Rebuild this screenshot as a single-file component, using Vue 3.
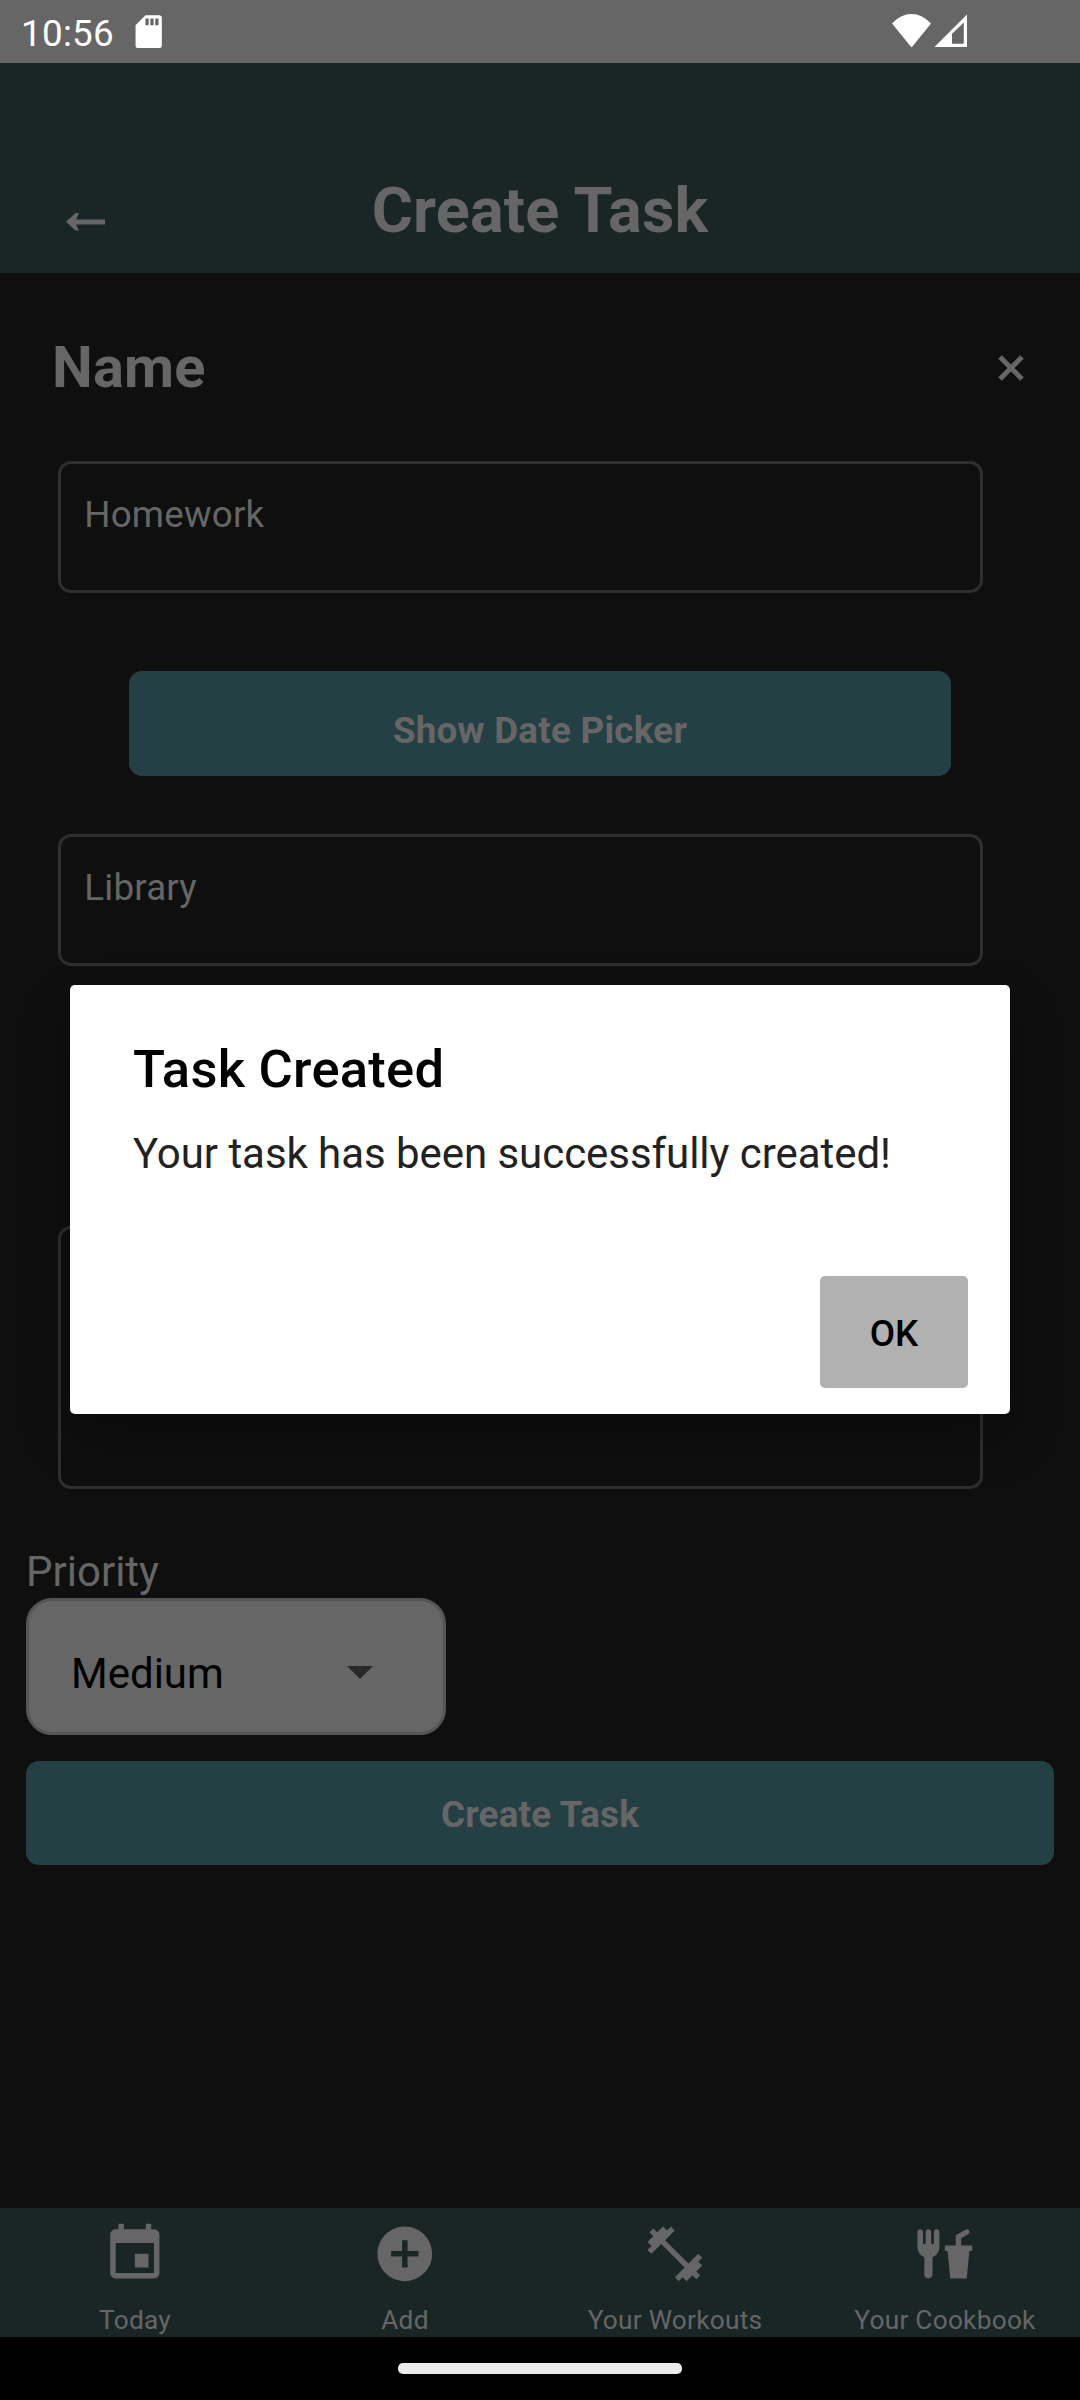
<script setup>
const tabs = [
  {
    label: 'Today',
    path: 'M17 12h-5v5h5v-5zM16 1v2H8V1H6v2H5c-1.11 0-1.99.9-1.99 2L3 19c0 1.1.89 2 2 2h14c1.1 0 2-.9 2-2V5c0-1.1-.9-2-2-2h-1V1h-2zm3 18H5V8h14v11z',
  },
  {
    label: 'Add',
    path: 'M12 2C6.48 2 2 6.48 2 12s4.48 10 10 10 10-4.48 10-10S17.52 2 12 2zm5 11h-4v4h-2v-4H7v-2h4V7h2v4h4v2z',
  },
  {
    label: 'Your Workouts',
    path: 'M20.57 14.86L22 13.43L20.57 12L17 15.57L8.43 7L12 3.43L10.57 2L9.14 3.43L7.71 2L5.57 4.14L4.14 2.71L2.71 4.14L4.14 5.57L2 7.71L3.43 9.14L2 10.57L3.43 12L7 8.43L15.57 17L12 20.57L13.43 22L14.86 20.57L16.29 22L18.43 19.86L19.86 21.29L21.29 19.86L19.86 18.43L22 16.29L20.57 14.86Z',
  },
  {
    label: 'Your Cookbook',
    path: 'M3 3A1 1 0 0 0 2 4V9.5C2 11.19 3.03 12.63 4.5 13.22V19.5A1.5 1.5 0 0 0 6 21A1.5 1.5 0 0 0 7.5 19.5V13.22C8.97 12.63 10 11.19 10 9.5V4A1 1 0 0 0 9 3A1 1 0 0 0 8 4V8A0.5 0.5 0 0 1 7.5 8.5A0.5 0.5 0 0 1 7 8V4A1 1 0 0 0 6 3A1 1 0 0 0 5 4V8A0.5 0.5 0 0 1 4.5 8.5A0.5 0.5 0 0 1 4 8V4A1 1 0 0 0 3 3M19.88 3C19.75 3 19.62 3.09 19.5 3.16L16 5.25V9H12V11H13L14 21H20L21 11H22V9H18V6.34L20.5 4.84C21 4.56 21.13 4 20.84 3.5C20.63 3.14 20.26 2.95 19.88 3Z',
  },
]
</script>

<template>
  <div class="screen">
    <div class="status">
      <span class="clock">10:56</span>
      <svg class="sd" viewBox="0 0 24 24">
        <path d="M18.500 2H10L4 8V20.5c0 .8.7 1.5 1.5 1.5h13c.8 0 1.5-.7 1.5-1.5V3.500c0-.8-.7-1.500-1.500-1.500zM12 8h-2V4h2v4zm3 0h-2V4h2v4zm3 0h-2V4h2v4z" />
      </svg>
      <svg class="signals" viewBox="0 0 75 33">
        <path d="M0 9.500Q8.500 0 19.500 0T39 9.500L19.500 33.500Z" />
        <path fill-rule="evenodd" d="M75 .5V33H42.500ZM71.800 8.500L60 19.800V29.800H71.800Z" />
      </svg>
    </div>

    <header class="header">
      <svg class="back" viewBox="0 0 39 18">
        <path d="M0 8.800L9.500 0H13L10 6.400H39V11.400H10L13 17.600H9.500Z" />
      </svg>
      <h1 class="title">Create Task</h1>
    </header>

    <main class="form">
      <div class="name-row">
        <h2 class="name">Name</h2>
        <svg class="close" viewBox="0 0 26 26">
          <path d="M2 2L24 24M24 2L2 24" />
        </svg>
      </div>
      <div class="field">Homework</div>
      <button class="btn date">Show Date Picker</button>
      <div class="field">Library</div>
      <div class="field notes"></div>
      <div class="label">Priority</div>
      <div class="select">
        <span>Medium</span>
        <svg class="caret" viewBox="0 0 26 13"><path d="M0 0H26L13 13Z" /></svg>
      </div>
      <button class="btn create">Create Task</button>
    </main>

    <nav class="tabs">
      <div v-for="tab in tabs" :key="tab.label" class="tab">
        <svg viewBox="0 0 24 24"><path :d="tab.path" /></svg>
        <span>{{ tab.label }}</span>
      </div>
    </nav>
    <div class="gesture"><div class="pill"></div></div>

    <div class="overlay">
      <div class="dialog">
        <div class="dialog-title">Task Created</div>
        <div class="dialog-text">Your task has been successfully created!</div>
        <button class="ok">OK</button>
      </div>
    </div>
  </div>
</template>

<style>
body {
  margin: 0;
  background: #0f0f0f;
}
</style>

<style scoped>
.screen {
  position: relative;
  display: flex;
  flex-direction: column;
  width: 1080px;
  height: 2400px;
  overflow: hidden;
  background: #0f0f0f;
  color: #666;
  font-family: Roboto, sans-serif;
}
.screen * {
  box-sizing: border-box;
}
svg {
  display: block;
  flex: none;
  fill: currentColor;
}
button {
  border: 0;
  font-family: inherit;
}
.status {
  display: flex;
  align-items: flex-start;
  flex: none;
  height: 63px;
  padding: 0 113px 0 21px;
  background: #666;
  color: #fff;
}
.clock {
  margin-top: 12px;
  font-size: 36.75px;
  line-height: 44px;
  letter-spacing: 0.3px;
  width: 107.500px;
}
.sd {
  width: 39.400px;
  height: 39.400px;
  margin-top: 12px;
}
.signals {
  width: 75px;
  height: 33px;
  margin: 14px 0 0 auto;
}
.header {
  display: grid;
  grid-template-columns: 1fr auto 1fr;
  align-items: end;
  flex: none;
  height: 210px;
  background: #192625;
}
.back {
  width: 39px;
  height: 18px;
  margin: 0 0 42px 66px;
}
.title {
  margin: 0 0 25px;
  font-size: 63px;
  line-height: 74px;
  font-weight: 700;
  letter-spacing: 0.15px;
}
.form {
  display: flex;
  flex-direction: column;
  align-items: flex-start;
  flex: 1;
  padding: 60px 26px 0;
}
.name-row {
  display: flex;
  align-items: center;
  justify-content: space-between;
  align-self: stretch;
  height: 68px;
  padding: 0 30px 0 26px;
  margin-bottom: 60px;
}
.name {
  margin: 0;
  font-size: 57.750px;
  line-height: 68px;
  font-weight: 700;
  letter-spacing: 0.15px;
}
.close {
  width: 26px;
  height: 26px;
  fill: none;
  stroke: currentColor;
  stroke-width: 5;
  margin-top: 2px;
}
.field {
  width: 925px;
  height: 132px;
  margin-left: 32px;
  padding: 28.500px 23.250px;
  border: 3px solid #2f2f2f;
  border-radius: 13px;
  font-size: 36.750px;
  line-height: 44px;
  letter-spacing: 0.2px;
}
.notes {
  height: 263px;
  margin-top: 260px;
}
.btn {
  background: #254045;
  color: #666;
  border-radius: 13px;
  font-size: 36.750px;
  line-height: 44px;
  font-weight: 700;
  letter-spacing: 0.25px;
}
.date {
  width: 822px;
  height: 105px;
  margin: 78px 0 58px 103px;
  padding: 15px 0 0;
}
.label {
  margin-top: 57.500px;
  font-size: 42px;
  line-height: 50px;
}
.select {
  display: flex;
  align-items: center;
  justify-content: space-between;
  width: 420px;
  height: 137px;
  margin-top: 1.500px;
  padding: 12px 70px 0 42px;
  border: 3px solid #555;
  border-radius: 26px;
  background: #666;
  color: #000;
  font-size: 42px;
  line-height: 50px;
}
.select span {
  padding-top: 3px;
}
.caret {
  width: 26px;
  height: 13px;
  fill: #292929;
}
.create {
  align-self: stretch;
  height: 104px;
  margin-top: 26px;
  padding: 4px 0 0;
}
.tabs {
  display: grid;
  grid-template-columns: repeat(4, 1fr);
  flex: none;
  height: 129px;
  background: #192625;
}
.tab {
  display: flex;
  flex-direction: column;
  align-items: center;
  padding-top: 13px;
}
.tab svg {
  width: 65.625px;
  height: 65.625px;
}
.tab span {
  margin-top: 18px;
  font-size: 26.250px;
  line-height: 31px;
  letter-spacing: 0.25px;
}
.gesture {
  display: flex;
  justify-content: center;
  flex: none;
  height: 63px;
  padding-top: 26px;
  background: #000;
}
.pill {
  width: 284px;
  height: 11px;
  border-radius: 5px;
  background: #ebebeb;
}
.overlay {
  position: absolute;
  inset: 0;
  display: flex;
  align-items: center;
  justify-content: center;
  padding-bottom: 1px;
}
.dialog {
  display: flex;
  flex-direction: column;
  width: 940px;
  height: 429px;
  padding: 53px 42px 0 63px;
  border-radius: 5px;
  background: #fff;
  box-shadow: 0 24px 50px rgba(0, 0, 0, 0.3);
}
.dialog-title {
  color: #000;
  font-size: 52.500px;
  line-height: 62px;
  font-weight: 500;
  letter-spacing: 0.25px;
}
.dialog-text {
  margin-top: 29px;
  color: #222;
  font-size: 42px;
  line-height: 50px;
  letter-spacing: -0.05px;
}
.ok {
  align-self: flex-end;
  width: 148px;
  height: 112px;
  margin-top: 97px;
  padding: 3px 0 0;
  border-radius: 5px;
  background: #b1b1b1;
  color: #000;
  font-size: 36.750px;
  font-weight: 500;
}
</style>
